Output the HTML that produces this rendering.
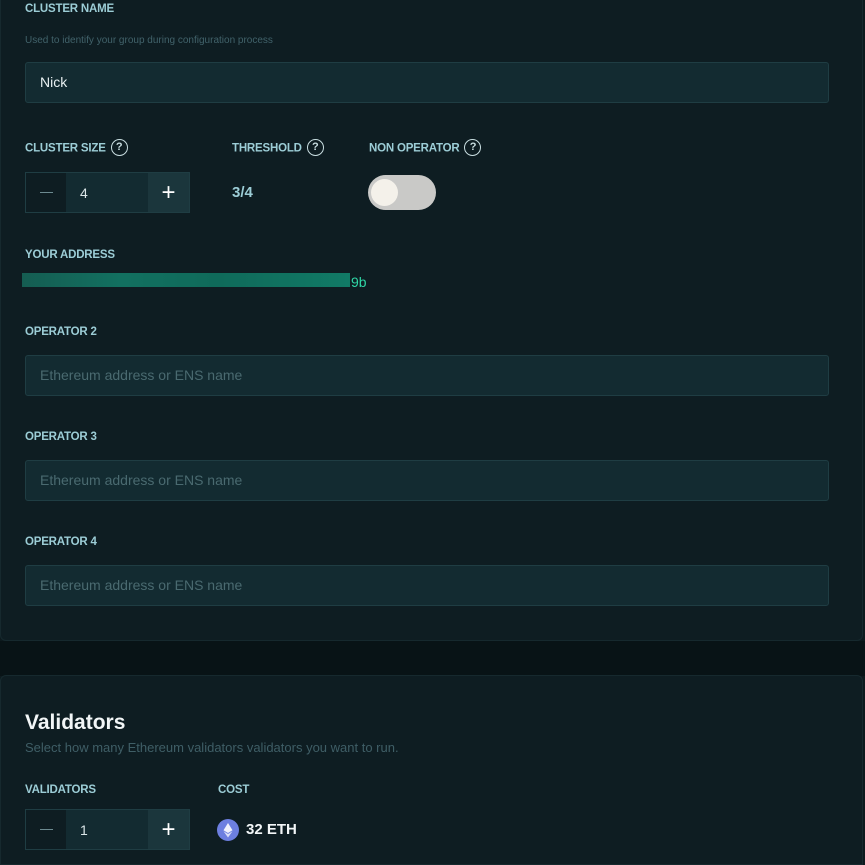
<!DOCTYPE html>
<html><head><meta charset="utf-8"><style>
*{margin:0;padding:0;box-sizing:border-box}
body{width:865px;height:851px;background:#0d1a1e;font-family:"Liberation Sans",sans-serif;position:relative;overflow:hidden;color:#fff}
.card{position:absolute;left:0;width:863px;background:#0e1d22;border:1px solid #16292e;border-radius:0 0 6px 6px}
.lbl{position:absolute;font-size:11.5px;font-weight:bold;color:#9ccdd6;letter-spacing:-0.2px}
.q{display:inline-block;width:17px;height:17px;border:1.6px solid #c8dde0;border-radius:50%;text-align:center;font-size:11px;line-height:14px;color:#c8dde0;margin-left:5px;vertical-align:middle;position:relative;top:-1px}
.inp{position:absolute;left:25px;width:804px;height:41px;background:#132b31;border:1px solid #1f3d43;border-radius:3px;font-size:14px;color:#4a6a70;padding:12px 14px}
.sub{position:absolute;font-size:10px;color:#41626a}
.step{position:absolute;left:25px;width:165px;height:41px;border:1px solid #1f3d43;display:flex}
.step .m{width:40px;background:#0e1d22;display:flex;align-items:center;justify-content:center}
.step .m i{display:block;width:13px;height:1.5px;background:#6c8a90}
.step .v{flex:1;background:#132b31;color:#dbe6e8;font-size:14px;padding:12px 14px}
.step .p{width:41px;background:#1b363c;color:#fff;font-size:24px;display:flex;align-items:center;justify-content:center;font-weight:300}
</style></head><body>
<div class="card" style="top:-2px;height:643px"></div>
<div style="position:absolute;top:641px;left:0;width:865px;height:35px;background:#081316"></div>
<div class="card" style="top:675px;height:190px;border-radius:6px 6px 0 0"></div>

<div class="lbl" style="left:25px;top:3px">CLUSTER NAME</div>
<div class="sub" style="left:25px;top:35px">Used to identify your group during configuration process</div>
<div class="inp" style="top:62px;color:#e8f0f1;padding-top:11px">Nick</div>

<div class="lbl" style="left:25px;top:140px">CLUSTER SIZE<span class="q">?</span></div>
<div class="lbl" style="left:232px;top:140px">THRESHOLD<span class="q">?</span></div>
<div class="lbl" style="left:369px;top:140px">NON OPERATOR<span class="q">?</span></div>
<div class="step" style="top:172px"><div class="m"><i></i></div><div class="v">4</div><div class="p">+</div></div>
<div style="position:absolute;left:232px;top:184px;font-size:15px;font-weight:bold;color:#9ccdd6">3/4</div>
<div style="position:absolute;left:368px;top:175px;width:68px;height:35px;border-radius:18px;background:#c9c9c7"><div style="position:absolute;left:3px;top:4px;width:27px;height:27px;border-radius:50%;background:#f4f1ea"></div></div>

<div class="lbl" style="left:25px;top:249px">YOUR ADDRESS</div>
<div style="position:absolute;left:22px;top:273px;width:328px;height:14px;background:linear-gradient(90deg,#155d52,#127060 30%,#0f6a5a 60%,#117a66)"></div>
<div style="position:absolute;left:351px;top:274px;font-size:14px;color:#2fd6a6">9b</div>

<div class="lbl" style="left:25px;top:326px">OPERATOR 2</div>
<div class="inp" style="top:355px;padding-top:11px">Ethereum address or ENS name</div>
<div class="lbl" style="left:25px;top:431px">OPERATOR 3</div>
<div class="inp" style="top:460px;padding-top:11px">Ethereum address or ENS name</div>
<div class="lbl" style="left:25px;top:536px">OPERATOR 4</div>
<div class="inp" style="top:565px;padding-top:11px">Ethereum address or ENS name</div>

<div style="position:absolute;left:25px;top:711px;font-size:21px;font-weight:bold;color:#f2f6f7">Validators</div>
<div style="position:absolute;left:25px;top:740px;font-size:13px;color:#3f5e66">Select how many Ethereum validators validators you want to run.</div>
<div class="lbl" style="left:25px;top:784px">VALIDATORS</div>
<div class="lbl" style="left:218px;top:784px">COST</div>
<div class="step" style="top:809px"><div class="m"><i></i></div><div class="v">1</div><div class="p">+</div></div>
<div style="position:absolute;left:217px;top:819px;width:22px;height:22px;border-radius:50%;background:#6d7fe0"><svg width="22" height="22" viewBox="0 0 22 22"><path d="M11 4L6.5 11.3 11 14l4.5-2.7z" fill="#fff" opacity=".9"/><path d="M11 15l-4.5-2.7L11 18.5l4.5-6.2z" fill="#fff" opacity=".75"/></svg></div>
<div style="position:absolute;left:246px;top:821px;font-size:15px;font-weight:bold;color:#f2f6f7">32 ETH</div>
</body></html>
